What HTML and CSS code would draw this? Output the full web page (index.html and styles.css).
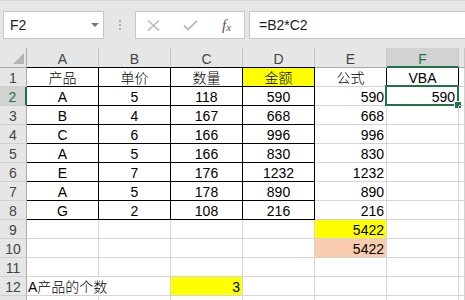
FILE: index.html
```html
<!DOCTYPE html>
<html lang="zh">
<head>
<meta charset="utf-8">
<title>Sheet</title>
<link rel="stylesheet" href="styles.css">
</head>
<body>
<div class="app">
  <div class="toolbar">
    <div class="namebox"><span>F2</span><span class="caret"></span></div>
    <div class="grip"><i></i><i></i><i></i></div>
    <div class="fbtns">
      <svg class="ico-x" width="13" height="11" viewBox="0 0 13 11"><path d="M1 0.5 L12 10.5 M12 0.5 L1 10.5" stroke="#bdbdbd" stroke-width="1.6" fill="none"/></svg>
      <svg class="ico-ok" width="15" height="11" viewBox="0 0 15 11"><path d="M1 5.5 L5 9.5 L14 0.8" stroke="#bdbdbd" stroke-width="2" fill="none"/></svg>
      <span class="fx">f<span class="fx-x">x</span></span>
    </div>
    <div class="finput">=B2*C2</div>
  </div>
  <div class="sheet">
    <div class="corner"><span class="tri"></span></div>
    <div class="ch">A</div><div class="ch">B</div><div class="ch">C</div><div class="ch">D</div><div class="ch">E</div><div class="ch sel">F</div><div class="ch"></div>

    <div class="rh">1</div>
    <div class="cell c tb top">产品</div><div class="cell c tb top">单价</div><div class="cell c tb top">数量</div><div class="cell c tb top yellow">金额</div><div class="cell c">公式</div><div class="cell c boxed">VBA</div><div class="cell"></div>

    <div class="rh sel">2</div>
    <div class="cell c tb">A</div><div class="cell c tb">5</div><div class="cell c tb">118</div><div class="cell c tb">590</div><div class="cell r">590</div><div class="cell r active">590<span class="selbox"></span><span class="handle"></span></div><div class="cell"></div>

    <div class="rh">3</div>
    <div class="cell c tb">B</div><div class="cell c tb">4</div><div class="cell c tb">167</div><div class="cell c tb">668</div><div class="cell r">668</div><div class="cell"></div><div class="cell"></div>

    <div class="rh">4</div>
    <div class="cell c tb">C</div><div class="cell c tb">6</div><div class="cell c tb">166</div><div class="cell c tb">996</div><div class="cell r">996</div><div class="cell"></div><div class="cell"></div>

    <div class="rh">5</div>
    <div class="cell c tb">A</div><div class="cell c tb">5</div><div class="cell c tb">166</div><div class="cell c tb">830</div><div class="cell r">830</div><div class="cell"></div><div class="cell"></div>

    <div class="rh">6</div>
    <div class="cell c tb">E</div><div class="cell c tb">7</div><div class="cell c tb">176</div><div class="cell c tb">1232</div><div class="cell r">1232</div><div class="cell"></div><div class="cell"></div>

    <div class="rh">7</div>
    <div class="cell c tb">A</div><div class="cell c tb">5</div><div class="cell c tb">178</div><div class="cell c tb">890</div><div class="cell r">890</div><div class="cell"></div><div class="cell"></div>

    <div class="rh">8</div>
    <div class="cell c tb">G</div><div class="cell c tb">2</div><div class="cell c tb">108</div><div class="cell c tb">216</div><div class="cell r">216</div><div class="cell"></div><div class="cell"></div>

    <div class="rh">9</div>
    <div class="cell"></div><div class="cell"></div><div class="cell"></div><div class="cell"></div><div class="cell r yellow">5422</div><div class="cell"></div><div class="cell"></div>

    <div class="rh">10</div>
    <div class="cell"></div><div class="cell"></div><div class="cell"></div><div class="cell"></div><div class="cell r peach">5422</div><div class="cell"></div><div class="cell"></div>

    <div class="rh">11</div>
    <div class="cell"></div><div class="cell"></div><div class="cell"></div><div class="cell"></div><div class="cell"></div><div class="cell"></div><div class="cell"></div>

    <div class="rh">12</div>
    <div class="cell l span2">A产品的个数</div><div class="cell r yellow">3</div><div class="cell"></div><div class="cell"></div><div class="cell"></div><div class="cell"></div>

    <div class="rh"></div>
    <div class="cell"></div><div class="cell"></div><div class="cell"></div><div class="cell"></div><div class="cell"></div><div class="cell"></div><div class="cell"></div>
  </div>
</div>
</body>
</html>
```

FILE: styles.css
```css
* {
  box-sizing: border-box;
  margin: 0;
  padding: 0;
}

html, body {
  margin: 0;
  width: 465px;
  height: 300px;
  overflow: hidden;
  background: #ffffff;
}

body {
  font-family: "Liberation Sans", "Noto Sans CJK SC", sans-serif;
  font-size: 14px;
  font-weight: 300;
  color: #000;
}

.app {
  display: flex;
  flex-direction: column;
}

/* ---------- toolbar ---------- */
.toolbar {
  height: 48px;
  background: #e6e6e6;
  border-top: 1px solid #d8d8d8;
  display: flex;
  align-items: flex-start;
  padding: 10px 0 0 3px;
}

.namebox {
  width: 101px;
  height: 28px;
  background: #fff;
  border: 1px solid #c6c6c6;
  display: flex;
  align-items: center;
  padding-left: 6px;
  color: #222;
}

.caret {
  margin-left: auto;
  margin-right: 4px;
  width: 0;
  height: 0;
  border-left: 4px solid transparent;
  border-right: 4px solid transparent;
  border-top: 4px solid #777;
}

.grip {
  margin-left: 15px;
  margin-top: 9px;
  display: flex;
  flex-direction: column;
  gap: 2px;
}

.grip i {
  display: block;
  width: 2px;
  height: 2px;
  background: #b0b0b0;
}

.fbtns {
  margin-left: 14px;
  width: 110px;
  height: 28px;
  background: #fff;
  border: 1px solid #c6c6c6;
  display: flex;
  align-items: center;
  padding-left: 11px;
}

.ico-ok {
  margin-left: 23px;
}

.fx {
  margin-left: 24px;
  font-family: "Liberation Serif", serif;
  font-style: italic;
  font-size: 15px;
  color: #555;
  line-height: 1;
}

.fx-x {
  font-size: 11px;
  position: relative;
  top: 1px;
}

.finput {
  margin-left: 4px;
  flex: 1;
  margin-right: -3px;
  height: 28px;
  background: #fff;
  border: 1px solid #c6c6c6;
  display: flex;
  align-items: center;
  padding-left: 9px;
  color: #222;
}

/* ---------- sheet ---------- */
.sheet {
  display: grid;
  grid-template-columns: 27px repeat(6, 72px) 1fr;
  grid-template-rows: 20px repeat(13, 19px);
}

.corner {
  background: #e6e6e6;
  border-right: 1px solid #ababab;
  border-bottom: 1px solid #ababab;
  display: flex;
  align-items: flex-end;
  justify-content: flex-end;
  padding: 0 2px 3px 0;
}

.tri {
  width: 0;
  height: 0;
  border-left: 11px solid transparent;
  border-bottom: 11px solid #b4b4b4;
}

.ch {
  background: #e6e6e6;
  border-right: 1px solid #c6c6c6;
  border-bottom: 1px solid #ababab;
  text-align: center;
  color: #444;
  padding-top: 3px;
  line-height: 17px;
}

.ch.sel {
  background: #d2d2d2;
  color: #217346;
  border-bottom: 2px solid #217346;
}

.rh {
  background: #e6e6e6;
  border-right: 1px solid #ababab;
  border-bottom: 1px solid #d0d0d0;
  text-align: center;
  color: #444;
  padding-top: 2px;
  line-height: 17px;
}

.rh.sel {
  background: #d2d2d2;
  color: #217346;
  border-right: 2px solid #217346;
}

.cell {
  position: relative;
  border-right: 1px solid #d4d4d4;
  border-bottom: 1px solid #d4d4d4;
  padding: 2px 2px 0;
  line-height: 17px;
  white-space: nowrap;
}

.c { text-align: center; }
.r { text-align: right; }
.l { text-align: left; padding-left: 1px; }

.span2 { grid-column: span 2; }

.tb {
  border-right-color: #000;
  border-bottom-color: #000;
}

.top {
  box-shadow: 0 -1px 0 #000;
}

.boxed {
  border-right-color: #000;
  border-bottom-color: #000;
  box-shadow: -1px 0 0 #000;
}

.yellow { background: #ffff00; }
.peach { background: #f8cbad; }

.active {
  padding-right: 3px;
}

.selbox {
  position: absolute;
  left: -2px;
  top: -2px;
  right: -1px;
  bottom: -1px;
  border: 2px solid #217346;
  pointer-events: none;
}

.handle {
  position: absolute;
  right: -3px;
  bottom: -3px;
  width: 6px;
  height: 6px;
  background: #217346;
  outline: 1px solid #fff;
}
```
